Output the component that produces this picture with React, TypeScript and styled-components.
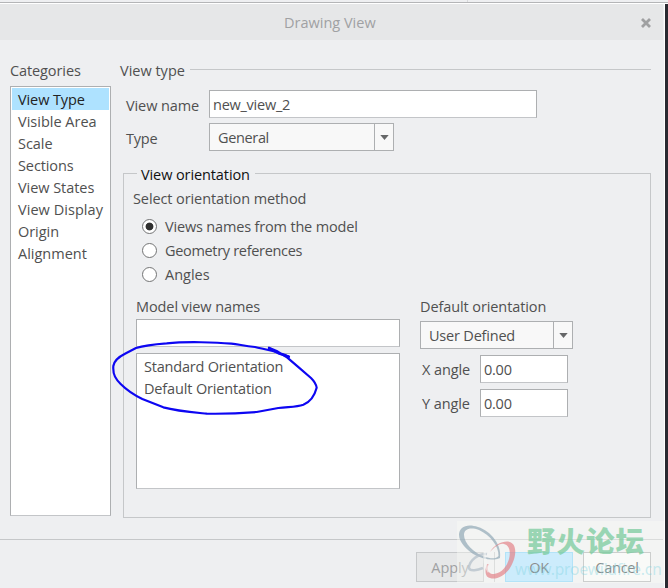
import React from "react";
import styled, { createGlobalStyle } from "styled-components";

const Global = createGlobalStyle`
  * { box-sizing: border-box; }
  body { margin: 0; background: #eeeff1; }
`;

const Screen = styled.div`
  position: relative;
  width: 668px;
  height: 588px;
  overflow: hidden;
  display: flex;
  flex-direction: column;
  background: #eeeff1;
  color: #505050;
  font-family: "Open Sans", "Noto Sans", sans-serif;
  font-size: 14.5px;
  line-height: 22px;
`;

const TopEdge = styled.div`
  height: 4px;
  flex: none;
  background: linear-gradient(#eeeff1 0 2px, #b4b5b7 2px 3px, #ffffff 3px 4px);
  display: flex;
  padding-left: 467px;
`;

const EdgeTick = styled.div`
  width: 1px;
  height: 2px;
  background: #d8d9db;
`;

const Frame = styled.div`
  flex: 1;
  min-height: 0;
  display: flex;
  border-right: 3px solid #2a2a31;
`;

const Dialog = styled.div`
  flex: 1;
  display: flex;
  flex-direction: column;
  border-right: 1px solid #ffffff;
  padding-right: 1px;
`;

const TitleBar = styled.header`
  height: 36px;
  flex: none;
  display: flex;
  align-items: center;
  background: #e6e7e8;
  color: #a0a1a3;
  padding: 2px 12px 0 284px;
  justify-content: space-between;
`;

const Label = styled.span<{ $track?: number; $width?: number }>`
  white-space: pre;
  flex: none;
  letter-spacing: ${(p) => p.$track ?? -0.1}px;
  ${(p) => (p.$width ? `width: ${p.$width}px;` : "")}
`;

const Body = styled.main`
  height: 499px;
  flex: none;
  display: flex;
  gap: 9px;
  padding: 20px 12px 0 10px;
`;

const Sidebar = styled.nav`
  width: 101px;
  display: flex;
  flex-direction: column;
  gap: 4px;
`;

const ListBox = styled.div<{ $h: number; $inset?: number }>`
  height: ${(p) => p.$h}px;
  background: #ffffff;
  border: 1px solid #adafb1;
  border-bottom-color: #c3c5c8;
  padding: ${(p) => p.$inset ?? 1}px 1px;
`;

const Item = styled.div<{ $selected?: boolean }>`
  height: 22px;
  display: flex;
  align-items: center;
  padding: 1px 0 0 6px;
  background: ${(p) => (p.$selected ? "#aee2ff" : "transparent")};
  color: ${(p) => (p.$selected ? "#222222" : "inherit")};
`;

const Content = styled.section`
  flex: 1;
  min-width: 0;
  display: flex;
  flex-direction: column;
`;

const SectionTitle = styled.div`
  height: 22px;
  display: flex;
  gap: 6px;
`;

const Rule = styled.div`
  flex: 1;
  height: 1px;
  margin-top: 9px;
  background: #c5c7c9;
`;

const Form = styled.div`
  padding: 8px 0 0 6px;
  display: flex;
  flex-direction: column;
  gap: 5px;
`;

const FormRow = styled.div<{ $drop?: number }>`
  height: 28px;
  display: flex;
  align-items: center;

  > ${Label} {
    padding-top: ${(p) => p.$drop ?? 0}px;
  }
`;

const Field = styled.div<{ $w: number }>`
  width: ${(p) => p.$w}px;
  height: 28px;
  flex: none;
  background: #ffffff;
  border: 1px solid #adafb1;
  border-bottom-color: #c3c5c8;
  padding: 3px 3px;
`;

const SelectBox = styled.div<{ $w: number }>`
  width: ${(p) => p.$w}px;
  height: 28px;
  flex: none;
  display: flex;
  justify-content: space-between;
  background: #f8f8f8;
  border: 1px solid #adafb1;
  padding-left: 8px;
  line-height: 27px;
`;

const SelectArrow = styled.div`
  width: 19px;
  display: flex;
  align-items: center;
  justify-content: center;
  border-left: 1px solid #adafb1;
`;

const Group = styled.div`
  height: 345px;
  flex: none;
  margin: 22px 0 0 3px;
  border: 1px solid #c5c7c9;
  padding-left: 9px;
`;

const Legend = styled.div`
  width: 118px;
  height: 22px;
  margin: -10px 0 0 4px;
  padding-left: 4px;
  background: #eeeff1;
  color: #111111;
`;

const Caption = styled.div`
  height: 22px;
  margin-top: 2px;
  display: flex;
`;

const Radios = styled.div`
  padding: 5px 0 0 9px;
`;

const RadioRow = styled.div`
  height: 24px;
  display: flex;
  align-items: center;
  gap: 8px;
`;

const RadioMark = styled.div<{ $on?: boolean }>`
  width: 15px;
  height: 15px;
  margin-bottom: 2px;
  border-radius: 50%;
  border: 1.5px solid #737475;
  background: ${(p) => (p.$on ? "radial-gradient(circle, #303030 3.5px, #ffffff 4.3px)" : "#ffffff")};
`;

const Columns = styled.div`
  display: flex;
  gap: 20px;
  padding: 9px 0 0 3px;
`;

const ModelViews = styled.div`
  width: 264px;
  display: flex;
  flex-direction: column;
`;

const FieldGap = styled.div`
  padding: 1px 0 6px;
`;

const Defaults = styled.div`
  display: flex;
  flex-direction: column;
`;

const DefaultSelect = styled.div`
  padding: 3px 0 6px;
`;

const Angles = styled.div`
  display: flex;
  flex-direction: column;
  gap: 6px;
  padding-left: 2px;
`;

const Footer = styled.footer`
  flex: 1;
  border-top: 1px solid #c5c7c9;
  display: flex;
  justify-content: flex-end;
  padding: 12px 12px 0 0;
`;

const Button = styled.button<{ $bg: string; $edge: string; $ink: string }>`
  width: 68px;
  height: 30px;
  padding: 1px 0 0;
  font: inherit;
  text-align: center;
  background: ${(p) => p.$bg};
  border: 1px solid ${(p) => p.$edge};
  color: ${(p) => p.$ink};
`;

const Divider = styled.div`
  width: 1px;
  height: 30px;
  margin: 0 10px;
  background: #c9cacc;
`;

const Spacer = styled.div`
  width: 10px;
`;

const Watermark = styled.div`
  position: absolute;
  left: 457px;
  top: 521px;
  width: 207px;
  height: 62px;
  background: rgba(250, 252, 248, 0.4);
  pointer-events: none;
`;

const MarkName = styled.div`
  position: absolute;
  left: 70px;
  top: 2px;
  font: 900 28.5px/34px "Noto Sans CJK SC", sans-serif;
  letter-spacing: 1px;
  white-space: pre;
  color: rgba(118, 202, 154, 0.72);
`;

const MarkUrl = styled.div`
  position: absolute;
  left: 58px;
  top: 38px;
  font: 15.5px/20px "Noto Sans", sans-serif;
  letter-spacing: -0.1px;
  white-space: pre;
  color: rgba(125, 210, 224, 0.4);
`;

const Ink = styled.svg`
  position: absolute;
  left: 100px;
  top: 330px;
`;

const MarkLogo = styled.svg`
  position: absolute;
  left: 0;
  top: 0;
`;

const categories: [string, number][] = [
  ["View Type", -0.1],
  ["Visible Area", 0],
  ["Scale", -0.05],
  ["Sections", -0.1],
  ["View States", -0.05],
  ["View Display", 0.05],
  ["Origin", -0.05],
  ["Alignment", 0],
];

const methods: [string, number][] = [
  ["Views names from the model", -0.17],
  ["Geometry references", -0.32],
  ["Angles", 0],
];

function Select({ text, width, track }: { text: string; width: number; track?: number }) {
  return (
    <SelectBox $w={width}>
      <Label $track={track}>{text}</Label>
      <SelectArrow>
        <svg width="9" height="5" viewBox="0 0 9 5">
          <path d="M0.3 0H8.7L4.5 5Z" fill="#666768" />
        </svg>
      </SelectArrow>
    </SelectBox>
  );
}

export default function App() {
  return (
    <Screen>
      <Global />
      <TopEdge>
        <EdgeTick />
      </TopEdge>
      <Frame>
        <Dialog>
          <TitleBar>
            <Label $track={0}>Drawing View</Label>
            <svg width="10" height="10" viewBox="0 0 10 10">
              <path d="M1 1L9 9M9 1L1 9" stroke="#9fa0a1" strokeWidth="2.8" />
            </svg>
          </TitleBar>
          <Body>
            <Sidebar>
              <Label>Categories</Label>
              <ListBox $h={430}>
                {categories.map(([name, track], i) => (
                  <Item key={name} $selected={i === 0}>
                    <Label $track={track}>{name}</Label>
                  </Item>
                ))}
              </ListBox>
            </Sidebar>
            <Content>
              <SectionTitle>
                <Label $width={64} $track={0}>View type</Label>
                <Rule />
              </SectionTitle>
              <Form>
                <FormRow $drop={3}>
                  <Label $width={83}>View name</Label>
                  <Field $w={328}>
                    <Label $track={-0.25}>new_view_2</Label>
                  </Field>
                </FormRow>
                <FormRow $drop={3}>
                  <Label $width={83} $track={-0.2}>Type</Label>
                  <Select text="General" width={185} track={-0.35} />
                </FormRow>
              </Form>
              <Group>
                <Legend>
                  <Label>View orientation</Label>
                </Legend>
                <Caption>
                  <Label>Select orientation method</Label>
                </Caption>
                <Radios>
                  {methods.map(([name, track], i) => (
                    <RadioRow key={name}>
                      <RadioMark $on={i === 0} />
                      <Label $track={track}>{name}</Label>
                    </RadioRow>
                  ))}
                </Radios>
                <Columns>
                  <ModelViews>
                    <Label>Model view names</Label>
                    <FieldGap>
                      <Field $w={264} />
                    </FieldGap>
                    <ListBox $h={136} $inset={1}>
                      <Item>
                        <Label $track={-0.2}>Standard Orientation</Label>
                      </Item>
                      <Item>
                        <Label $track={-0.15}>Default Orientation</Label>
                      </Item>
                    </ListBox>
                  </ModelViews>
                  <Defaults>
                    <Label>Default orientation</Label>
                    <DefaultSelect>
                      <Select text="User Defined" width={153} track={-0.2} />
                    </DefaultSelect>
                    <Angles>
                      <FormRow $drop={1}>
                        <Label $width={58}>X angle</Label>
                        <Field $w={88}>
                          <Label $track={-0.25}>0.00</Label>
                        </Field>
                      </FormRow>
                      <FormRow $drop={1}>
                        <Label $width={58}>Y angle</Label>
                        <Field $w={88}>
                          <Label $track={-0.25}>0.00</Label>
                        </Field>
                      </FormRow>
                    </Angles>
                  </Defaults>
                </Columns>
              </Group>
            </Content>
          </Body>
          <Footer>
            <Button $bg="#e6e7e8" $edge="#c6c8ca" $ink="#a0a1a3">
              <Label>Apply</Label>
            </Button>
            <Divider />
            <Button $bg="#aee2ff" $edge="#84d2f8" $ink="#404448">
              <Label $track={-0.4}>OK</Label>
            </Button>
            <Spacer />
            <Button $bg="#f8f8f8" $edge="#adafb1" $ink="#404040">
              <Label $track={-0.25}>Cancel</Label>
            </Button>
          </Footer>
        </Dialog>
      </Frame>
      <Ink width="240" height="100" viewBox="0 0 720 300" fill="none" stroke="#0d06f2" strokeLinecap="round" strokeLinejoin="round">
        <path
          strokeWidth="6.5"
          d="M567 80C540 66 515 62 465 51C430 47 415 43 394 41C350 37 260 34 200 40C160 43 130 47 108 54L75 71C55 81 42 91 40 108C38 135 48 148 62 162C82 182 100 194 127 207L190 232C230 243 280 247 320 251C370 252 420 250 470 246L535 234C570 230 590 231 610 224C630 216 644 196 650 173C648 160 642 153 633 144L597 113L562 83L530 63L507 53"
        />
        <path strokeWidth="7" d="M507 55L535 70L566 80" />
      </Ink>
      <Watermark>
        <MarkLogo width="70" height="62" viewBox="0 0 70 62">
          <path
            fillRule="evenodd"
            fill="#8ea5b4"
            fillOpacity="0.68"
            d="M2 14C2 6 10 2 21 6C34 10 45 24 43 37C31 42 14 34 7 25C4 21 2 18 2 14ZM7 14C7 22 17 32 27 35.5C34 38 39 38 41.5 35C42 25 33 14 22 9C13 6 7 8 7 14Z"
          />
          <path
            fillRule="evenodd"
            fill="#e38389"
            fillOpacity="0.7"
            d="M33 31C37 24 45 20 51 20.5C62 22 59 39 52 48.5C45 57 36 60 30 55.5C28 53 28 47 30 43L31.5 43C29 50 33 53.5 37 53C45 52 50 45 52 38C54 30 52 24 47 23C42 22 38 26 33 31Z"
          />
          <path
            d="M30 33C22 32 12 39 12 47C13 51 21 49 26 47"
            fill="none"
            stroke="#b1bec7"
            strokeOpacity="0.7"
            strokeWidth="2.5"
          />
          <path d="M28 30C27 38 28 45 32 51" fill="none" stroke="#f5f6f5" strokeOpacity="0.6" strokeWidth="3" />
        </MarkLogo>
        <MarkName>野火论坛</MarkName>
        <MarkUrl>www.proewildfire.cn</MarkUrl>
      </Watermark>
    </Screen>
  );
}
